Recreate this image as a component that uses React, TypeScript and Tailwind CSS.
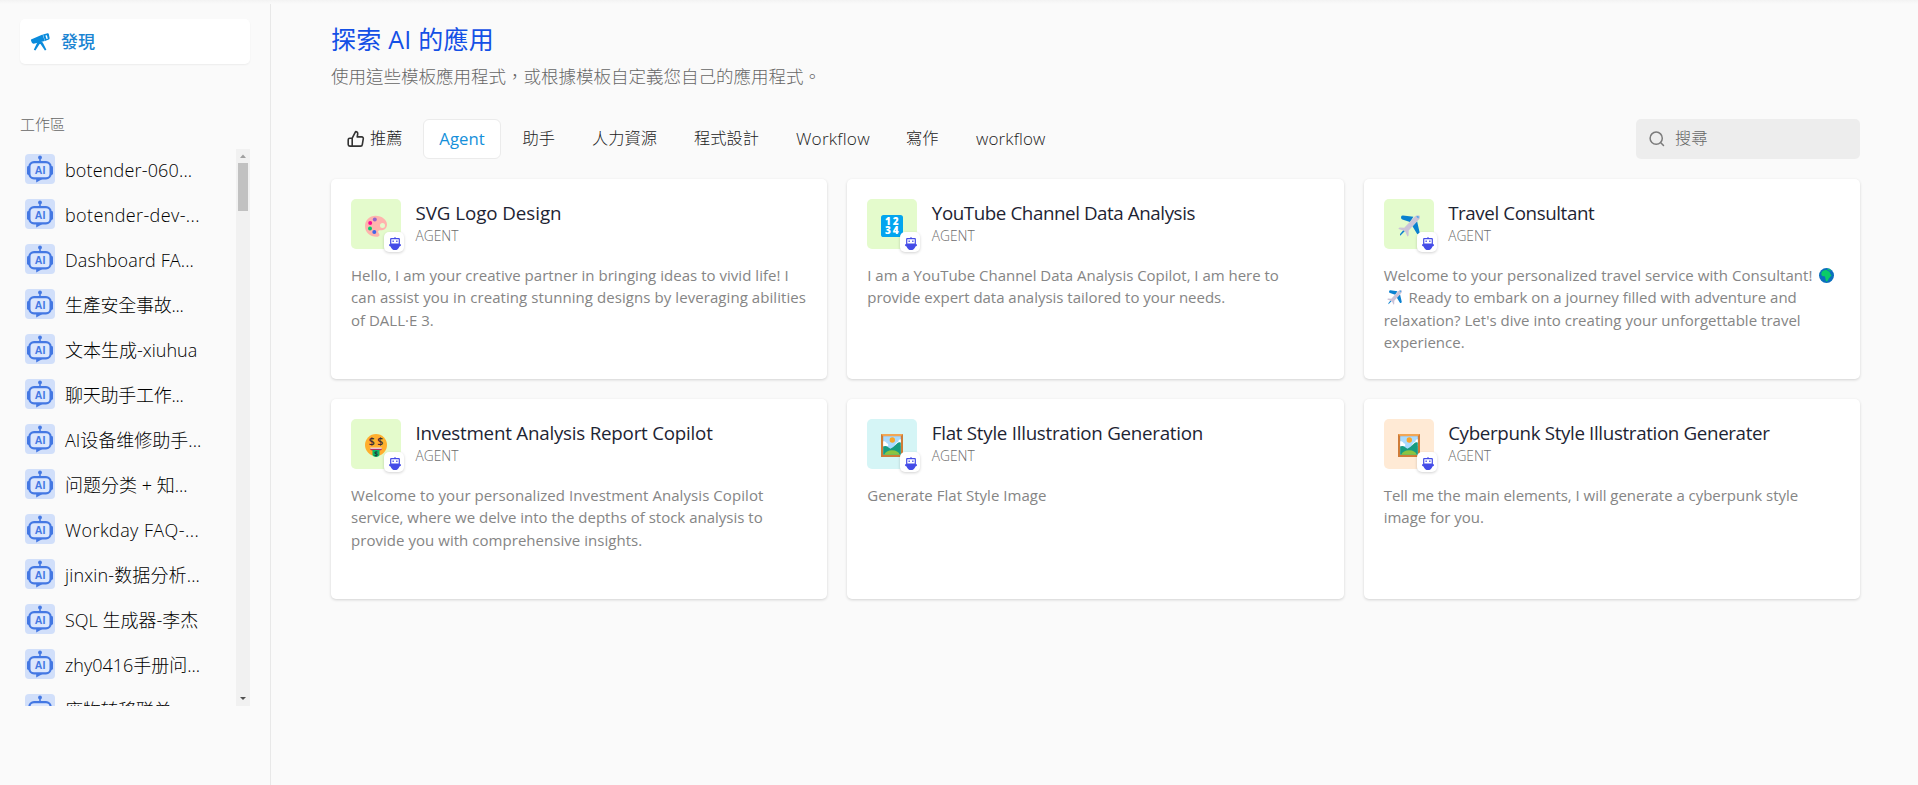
import React from 'react';

const apps = [
  { name: 'botender-060...', spacing: 'tracking-[0.16px]' },
  { name: 'botender-dev-...', spacing: 'tracking-[0.38px]' },
  { name: 'Dashboard FA...', spacing: 'tracking-[0.12px]' },
  { name: '生產安全事故...', spacing: 'tracking-[-0.25px]' },
  { name: '文本生成-xiuhua', spacing: 'tracking-normal' },
  { name: '聊天助手工作...', spacing: 'tracking-[-0.25px]' },
  { name: 'AI设备维修助手...', spacing: 'tracking-normal' },
  { name: '问题分类 + 知...', spacing: 'tracking-normal' },
  { name: 'Workday FAQ-...', spacing: 'tracking-[0.42px]' },
  { name: 'jinxin-数据分析...', spacing: 'tracking-[0.14px]' },
  { name: 'SQL 生成器-李杰', spacing: 'tracking-normal' },
  { name: 'zhy0416手册问...', spacing: 'tracking-normal' },
  { name: '废物转移联单...', spacing: 'tracking-[-0.25px]' },
];

function BotIcon() {
  return (
    <svg className="h-[30px] w-[30px] shrink-0" viewBox="0 0 30 30">
      <rect width="30" height="30" rx="4" fill="#d1dffa" />
      <circle cx="15" cy="3.4" r="1.9" fill="#4478e3" />
      <path d="M14.2 4.5h1.6v3.8h-1.6z" fill="#4478e3" />
      <rect x="2" y="12" width="3" height="9" rx="1.4" fill="#4478e3" />
      <rect x="25" y="12" width="3" height="9" rx="1.4" fill="#4478e3" />
      <rect x="4.4" y="8.1" width="21.2" height="16.2" rx="4.6" fill="#dce7fd" stroke="#4478e3" strokeWidth="2.2" />
      <path d="M11.2 24.2h7.6l-7.6 4.4z" fill="#4478e3" />
      <text x="15.1" y="20.100" textAnchor="middle" fontSize="10.500" fontWeight="700" fontFamily="Liberation Sans, sans-serif" fill="#4478e3">AI</text>
    </svg>
  );
}

function Telescope() {
  return (
    <svg className="h-5 w-5" viewBox="0 0 20 20" fill="#0a8bdc">
      <path d="M1 7.600 12.600 2.600l2.200 6.300L3.600 11.800C2.200 12.100.6 8.600 1 7.600z" />
      <path fillRule="evenodd" d="M13 2.500 17.600 1.200c.6-.1 1 .1 1.200.7l.8 4.100c.1.700-.1 1.200-.7 1.400l-3.900 1.500zM15.400 3.600l1.100 3.500 1.300-.4-.9-3.500z" />
      <path d="M7.600 9.800h4.400l1 1.300 3.400 6.700-1.500.8-4.400-6.600h-.9l-4.200 6.600-1.600-.9z" />
    </svg>
  );
}

function ThumbIcon() {
  return (
    <svg className="h-[18px] w-[18px]" viewBox="0 0 18 18" fill="none" stroke="#333" strokeWidth="1.6" strokeLinejoin="round" strokeLinecap="round">
      <path d="M5.2 8.2 8.6 1.6c1.5 0 2.3 1 2.1 2.4l-.5 2.900h4.600c1 0 1.700.8 1.500 1.800l-1 5.900c-.1.8-.8 1.500-1.700 1.500H5.200zM5.200 8.200H2.800c-.9 0-1.600.7-1.600 1.600v4.700c0 .9.7 1.600 1.600 1.600h2.400z" />
    </svg>
  );
}

function Palette() {
  return (
    <svg className="h-[22px] w-[22px]" viewBox="0 0 22 22">
      <path fillRule="evenodd" fill="#ffb3ad" d="M10.5.8C17 .8 22 5 22 9.6c0 3.5-2.3 5.6-5 5.6-2.2 0-3.9-.2-3.9 1.6 0 1.300 1.400 1.800 1.400 3.200 0 1.200-1.200 1.800-3 1.800C5 21.800 0 17.400 0 11.300 0 5.300 4.600.8 10.500.8zM17.500 8a2.500 2.500 0 1 0 0 5 2.500 2.500 0 0 0 0-5z" />
      <circle cx="9.800" cy="4.600" r="2" fill="#9166cc" />
      <circle cx="5.200" cy="8" r="2" fill="#fc0b91" />
      <circle cx="5" cy="13.400" r="2" fill="#08c86b" />
      <circle cx="9.300" cy="16.900" r="2" fill="#4066e8" />
    </svg>
  );
}

function Numbers() {
  return (
    <svg className="h-[22px] w-[22px]" viewBox="0 0 22 22">
      <rect width="22" height="22" rx="2.600" fill="#03a5ef" />
      <g fontFamily="Open Sans, sans-serif" fontSize="10" fontWeight="800" fill="#fff" textAnchor="middle">
        <text x="7" y="10.200">1</text>
        <text x="14.800" y="10.200">2</text>
        <text x="7" y="19.200">3</text>
        <text x="14.800" y="19.200">4</text>
      </g>
    </svg>
  );
}

function Plane({ className }: { className: string }) {
  return (
    <svg className={className} viewBox="0 0 22 22">
      <path fill="#0a80cf" d="M3.200 1.600c.2-.8.8-1.200 1.800-1.100l10.400 1.200-3.400 5.200-7.600-2.400c-1.300-.5-1.600-1.400-1.200-2.900zM20.500 19c-.8.300-1.500 0-1.800-.8l-4.200-7 4.600-5 2.500 11.200c.1.900-.3 1.400-1.100 1.600z" />
      <path fill="#0a80cf" d="m7.200 15.800-5 5c-.4-.9-.2-1.600.3-2.200l3-3.600z" />
      <path fill="#cbc3d8" d="M16.800 1.400C18.600-.1 20.900-.1 21.600.8c.8.9.3 2.600-1 4L10.700 15.600l-.1 4.400c0 .9-.4 1.400-1.200 1.400l-2-4.600-2.100-1.200L.6 14c0-.8.400-1.300 1.300-1.400l4.400.2z" />
      <path fill="#4fa9ea" d="M18.200 1.400c.8-.6 1.700-.7 2.300-.2.500.6.400 1.500-.3 2.400z" />
    </svg>
  );
}

function Globe() {
  return (
    <svg className="mx-[3px] inline-block h-[15px] w-[15px] align-[-2px]" viewBox="0 0 15 15">
      <circle cx="7.500" cy="7.500" r="7.500" fill="#0b6fbe" />
      <path fill="#0bcb68" d="M2.600 4.600C3.800 2.400 6 1.800 7.800 2.200l2.700 1.500 1.300 3.100.9.500-2.700 3-1.700 3c-1.300.5-1.700-.6-1.700-1.800L6 8.600 3.200 8C2.200 7.200 2 5.600 2.600 4.600zM8 .6l3.400 1 .5 1.300L9 2z" />
    </svg>
  );
}

function MoneyFace() {
  return (
    <svg className="h-[23px] w-[22px]" viewBox="0 0 22 23">
      <circle cx="11" cy="11" r="11" fill="#ffaf2e" />
      <g fontFamily="Open Sans, sans-serif" fontSize="10.500" fontWeight="600" fill="#3d2b36" textAnchor="middle">
        <text x="6.800" y="10.900">$</text>
        <text x="15.300" y="10.900">$</text>
      </g>
      <path fill="#b5305f" d="M5.300 14h11.400v1.800c-1 1.500-10.400 1.500-11.400 0z" />
      <path fill="#f6e9f4" d="M5.300 13.600h11.400v1.200H5.300z" />
      <path fill="#0bb86a" d="M7.500 16h7v4.200c0 1.800-1.400 2.800-3.500 2.800s-3.500-1-3.500-2.800z" />
      <text x="11" y="21.700" fontFamily="Open Sans, sans-serif" fontSize="6.500" fontWeight="700" fill="#24383a" textAnchor="middle">$</text>
    </svg>
  );
}

function Picture() {
  return (
    <svg className="h-[23px] w-[22px]" viewBox="0 0 22 23">
      <rect width="22" height="23" fill="#cf7c38" />
      <path d="M0 0h22l-2 2H2z" fill="#f2a654" />
      <rect x="2.200" y="2.200" width="17.600" height="18.600" fill="#a9dbff" />
      <circle cx="11.300" cy="6" r="2.700" fill="#f9a52b" />
      <path fill="#fff" d="M2.200 7.500c1.300-.8 3.200.5 3.400 1.800 1.500.2 2.200 1.700 1.300 2.800H2.200zM19.800 5.400c-1.200-.2-2.100.7-2.500 2.300-1.900.3-2.700 1.900-3.700 4.200h6.200z" />
      <path fill="#179c80" d="M2.200 12.800c1-.9 3-1 4.200 0l3 1.900 2.900-1.700 4.200-4c1-.9 2.300-.9 3.300-.3v12.100H2.200z" />
      <path fill="#8bc441" d="M3.200 20.800c1.200-3 4-4.500 7.900-4.500s6.700 1.500 7.700 4.500z" />
    </svg>
  );
}

function Badge() {
  return (
    <div className="absolute -right-[3px] top-[33px] flex h-5 w-5 items-center justify-center rounded-[5px] bg-white shadow-[0_1px_3px_rgba(0,0,0,0.18)]">
      <svg className="ml-[2px] mt-[2px] h-[13px] w-[12px] shrink-0" viewBox="0 0 12 13">
        <path fill="#444ce7" d="M5.500 0h1v1.500h-1z" />
        <path fillRule="evenodd" fill="#444ce7" d="M2.300 1h7.400c.7 0 1.200.5 1.200 1.200V7.200h1v1.500l-1.400.700C9.600 11.900 8 13 6 13S2.400 11.900 1.500 9.400L.1 8.700V7.200h1V2.200C1.100 1.500 1.600 1 2.300 1zM2.300 2.200v4.300h7.400V2.200z" />
        <path fill="#444ce7" d="M3.500 3.600h1.300v1.500H3.500zM7.200 3.600h1.300v1.500H7.200z" />
      </svg>
    </div>
  );
}

type CardData = {
  title: string;
  titleClass: string;
  tile: string;
  icon: React.ReactNode;
  lines: { body: React.ReactNode; cls: string }[];
};

const cards: CardData[] = [
  {
    title: 'SVG Logo Design', titleClass: 'tracking-[-0.06px]', tile: 'bg-[#e4fbcc]', icon: <Palette />,
    lines: [
      { body: 'Hello, I am your creative partner in bringing ideas to vivid life! I', cls: 'tracking-[0.03px]' },
      { body: 'can assist you in creating stunning designs by leveraging abilities', cls: 'tracking-[0.07px]' },
      { body: 'of DALL·E 3.', cls: 'tracking-normal' },
    ],
  },
  {
    title: 'YouTube Channel Data Analysis', titleClass: 'tracking-[-0.42px]', tile: 'bg-[#e4fbcc]', icon: <Numbers />,
    lines: [
      { body: 'I am a YouTube Channel Data Analysis Copilot, I am here to', cls: 'tracking-[-0.02px]' },
      { body: 'provide expert data analysis tailored to your needs.', cls: 'tracking-[-0.02px]' },
    ],
  },
  {
    title: 'Travel Consultant', titleClass: 'tracking-[-0.4px]', tile: 'bg-[#e4fbcc]', icon: <Plane className="h-[22px] w-[22px]" />,
    lines: [
      { body: <>Welcome to your personalized travel service with Consultant! <Globe /></>, cls: 'tracking-[0.05px]' },
      { body: <><Plane className="mx-[3px] inline-block h-[15px] w-[15px] align-[-2px]" /> Ready to embark on a journey filled with adventure and</>, cls: 'tracking-normal' },
      { body: "relaxation? Let's dive into creating your unforgettable travel", cls: 'tracking-[0.02px]' },
      { body: 'experience.', cls: 'tracking-normal' },
    ],
  },
  {
    title: 'Investment Analysis Report Copilot', titleClass: 'tracking-[-0.22px]', tile: 'bg-[#e4fbcc]', icon: <MoneyFace />,
    lines: [
      { body: 'Welcome to your personalized Investment Analysis Copilot', cls: 'tracking-[0.07px]' },
      { body: 'service, where we delve into the depths of stock analysis to', cls: 'tracking-normal' },
      { body: 'provide you with comprehensive insights.', cls: 'tracking-[0.04px]' },
    ],
  },
  {
    title: 'Flat Style Illustration Generation', titleClass: 'tracking-[-0.27px]', tile: 'bg-[#d5f5f6]', icon: <Picture />,
    lines: [{ body: 'Generate Flat Style Image', cls: 'tracking-[0.03px]' }],
  },
  {
    title: 'Cyberpunk Style Illustration Generater', titleClass: 'tracking-[-0.35px]', tile: 'bg-[#ffead5]', icon: <Picture />,
    lines: [
      { body: 'Tell me the main elements, I will generate a cyberpunk style', cls: 'tracking-[-0.03px]' },
      { body: 'image for you.', cls: 'tracking-normal' },
    ],
  },
];

function Card({ card }: { card: CardData }) {
  return (
    <article className="h-[200px] rounded-[5px] bg-white p-5 shadow-[0_1px_3px_rgba(0,0,0,0.16)]">
      <div className="flex gap-[14.5px]">
        <div className={'relative flex h-[50px] w-[50px] shrink-0 items-center justify-center rounded-[5px] pt-[3px] ' + card.tile}>
          {card.icon}
          <Badge />
        </div>
        <div className="whitespace-nowrap pt-px">
          <h3 className={'text-[18.75px] leading-[25px] text-[#1d2433] ' + card.titleClass}>{card.title}</h3>
          <div className="text-[13.75px] leading-[21px] font-light text-[#6b6b6b]">AGENT</div>
        </div>
      </div>
      <div className="mt-[14.5px] whitespace-nowrap text-[15px] leading-[22.5px] font-normal text-[#858585]">
        {card.lines.map((line, i) => (
          <p key={i} className={line.cls}>{line.body}</p>
        ))}
      </div>
    </article>
  );
}

function Sidebar() {
  return (
    <aside className="flex w-[271px] shrink-0 flex-col border-r border-[#e8e8e8] pl-5 pr-5 pt-[19px]">
      <div className="flex h-[45px] w-[230px] items-center gap-[11px] rounded-[5px] bg-white pl-[10px] text-[17px] font-medium text-[#1a84d2] shadow-[0_1px_2px_rgba(0,0,0,0.06)]">
        <Telescope />
        <span>發現</span>
      </div>
      <div className="mt-[48px] h-[24px] text-[15px] leading-[24px] font-light text-[#666]">工作區</div>
      <div className="mt-[13px] flex h-[557px] w-[230px] overflow-hidden">
        <ul className="flex-1 pl-[5px]">
          {apps.map((a) => (
            <li key={a.name} className="flex h-[45px] items-start gap-[10px] pt-[5px] text-[18px] leading-[32px] font-light whitespace-nowrap text-black">
              <BotIcon />
              <span className={a.spacing}>{a.name}</span>
            </li>
          ))}
        </ul>
        <div className="flex w-[14px] flex-col items-center justify-between bg-[#f1f1f1]">
          <div className="flex flex-col items-center">
            <svg className="h-[14px] w-[14px]" viewBox="0 0 14 14"><path d="M7 5.500 10 9H4z" fill="#a0a0a0" /></svg>
            <div className="h-12 w-[10px] bg-[#c1c1c1]" />
          </div>
          <svg className="h-[14px] w-[14px]" viewBox="0 0 14 14"><path d="M7 8 10 5H4z" fill="#505050" /></svg>
        </div>
      </div>
    </aside>
  );
}

const tabs = [
  { label: '助手', cls: 'ml-[21.500px] w-[69.5px]' },
  { label: '人力資源', cls: 'w-[102px]' },
  { label: '程式設計', cls: 'w-[102px]' },
  { label: 'Workflow', cls: 'w-[110px] text-[17.25px] tracking-[0.2px]' },
  { label: '寫作', cls: 'w-[70px]' },
  { label: 'workflow', cls: 'w-[80px] text-[17px] tracking-[0.15px]' },
];

export default function App() {
  return (
    <div className="relative flex h-[785px] w-full overflow-hidden bg-[#fafafa] font-['Open_Sans','Noto_Sans_CJK_TC',sans-serif]">
      <div className="absolute inset-x-0 top-0 h-1 bg-gradient-to-b from-[#f3f3f3] to-[#fafafa]" />
      <Sidebar />
      <main className="flex-1 pl-[60px] pr-[58px] pt-[21px]">
        <h1 className="text-[25px] leading-[36px] font-normal tracking-[0.25px] text-[#1450e6]">探索 AI 的應用</h1>
        <p className="mt-[6px] text-[17.5px] leading-[26px] font-light text-[#666]">使用這些模板應用程式，或根據模板自定義您自己的應用程式。</p>
        <div className="mt-[29px] flex h-[41px] items-center whitespace-nowrap text-[16.25px] font-light text-[#222]">
          <div className="flex w-[92px] items-center gap-[5px] pl-4"><ThumbIcon /><span>推薦</span></div>
          <div className="flex h-10 w-[78px] items-center justify-center rounded-[6px] border border-[#ebebeb] bg-white text-[16.75px] font-normal text-[#1590da]">Agent</div>
          {tabs.map((t) => (
            <div key={t.label} className={t.cls}>{t.label}</div>
          ))}
          <div className="ml-auto flex h-10 w-[224px] items-center gap-[10px] rounded-[5px] bg-[#ededed] pl-[13px] text-[16.25px] text-[#666]">
            <svg className="h-4 w-4" viewBox="0 0 16 16" fill="none" stroke="#7b7b7b" strokeWidth="1.500" strokeLinecap="round"><circle cx="7.200" cy="7.200" r="6.100" /><path d="m11.800 11.800 2.700 2.700" /></svg>
            <span>搜尋</span>
          </div>
        </div>
        <div className="mt-[20px] grid grid-cols-3 gap-5">
          {cards.map((c) => <Card key={c.title} card={c} />)}
        </div>
      </main>
    </div>
  );
}
